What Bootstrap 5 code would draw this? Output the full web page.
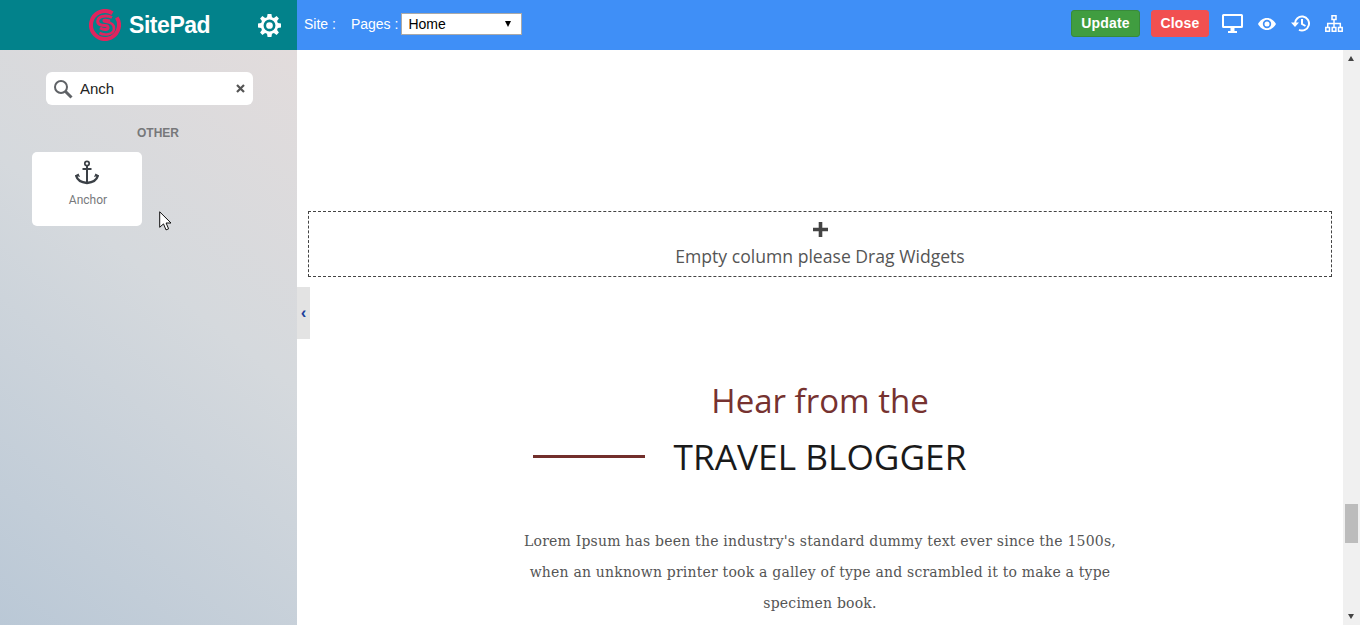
<!DOCTYPE html>
<html lang="en">
<head>
    <meta charset="UTF-8">
    <meta name="viewport" content="width=device-width, initial-scale=1.0">
    <title>SitePad Editor</title>
    <link href="https://cdn.jsdelivr.net/npm/bootstrap@5.3.0/dist/css/bootstrap.min.css" rel="stylesheet">
    <style>
        html, body { height: 100%; overflow: hidden; }
        body { font-family: "Liberation Sans", Arial, sans-serif; font-size: 14px; }
        .editor-top { height: 50px; background: #3f8ff7; color: #fff; }
        .brand-box { width: 297px; background: #02828b; padding-left: 89px; padding-right: 16px; }
        .brand-name { font-size: 23px; font-weight: 700; margin-left: 8px; letter-spacing: -.45px; }
        .gear-icon { margin-left: auto; }
        .top-fields { padding: 0 0 2px 7px; font-size: 14px; }
        .site-label { margin-right: 15px; }
        .page-select { width: 121px; height: 22px; background: #fff; border: 1px solid #a9a9a9; color: #000; padding: 0 6px; margin-left: 3px; font-size: 14px; }
        .caret-down { width: 0; height: 0; border-left: 3.5px solid transparent; border-right: 3.5px solid transparent; border-top: 6px solid #000; }
        .top-right { padding-bottom: 3px; }
        .top-btn { font-size: 14px; font-weight: 700; color: #fff; height: 27px; padding: 0; border-radius: 3px; line-height: 25px; letter-spacing: .2px; }
        .top-btn:hover { color: #fff; }
        .btn-update { background: #409d40; border: 1px solid #388a3a; width: 69px; margin-right: 11px; }
        .btn-close-page { background: #f15050; border: 1px solid #f15050; width: 58px; margin-right: 13px; }
        .top-tools { padding-right: 17px; gap: 15px; }
        .editor-body { height: 575px; position: relative; }
        .side-panel { width: 297px; background: linear-gradient(218deg, #e2dcdc 0%, #d5d9dd 42%, #bac8d6 100%); }
        .search-pill { width: 207px; height: 33px; margin: 22px 0 0 46px; background: #fff; border-radius: 6px; padding: 0 8px 0 7px; color: #222; font-size: 15px; }
        .search-pill svg:first-child { margin-right: 7px; }
        .search-pill span { padding-top: 2px; }
        .clear-x { margin-left: auto; }
        .side-heading { margin: 21px 0 0 0; padding-left: 19px; text-align: center; font-size: 12px; font-weight: 700; color: #77787a; line-height: 14px; }
        .widget-tile { width: 110px; height: 74px; margin: 12px 0 0 32px; background: #fff; border-radius: 5px; color: #77797c; font-size: 12px; padding-top: 8px; }
        .widget-tile span { margin-top: 8px; padding-left: 2px; line-height: 14px; font-family: Roboto, "Liberation Sans", sans-serif; }
        .pointer-mark { position: absolute; left: 159px; top: 161px; }
        .panel-toggle { position: absolute; left: 297px; top: 237px; width: 13px; height: 52px; background: #e3e3e3; color: #1d3f9c; font-size: 17px; font-weight: 700; line-height: 52px; text-align: center; z-index: 2; }
        .page-area { flex: 1; min-width: 0; padding: 161px 11px 0; background: #fff; overflow: hidden; }
        .empty-col { height: 66px; border: 1px dashed #444; font-family: "Open Sans", sans-serif; font-size: 17.6px; color: #555; line-height: 24px; }
        .empty-plus { display: block; margin: 10px auto 7px; }
        .hear-title { margin: 97px 0 0; text-align: center; font-family: "Open Sans", sans-serif; font-weight: 400; font-size: 33px; line-height: 54px; color: #763230; }
        .travel-row { display: grid; grid-template-columns: 1fr auto 1fr; align-items: center; font-family: "Open Sans", sans-serif; font-size: 35.25px; line-height: 56px; color: #1a1a1a; }
        .travel-name { padding-bottom: 2px; }
        .travel-rule { justify-self: end; width: 112px; height: 3px; background: #722f2b; margin: 0 29px 1px 0; }
        .blog-text { width: 600px; margin: 40px auto 0; text-align: center; font-family: "DejaVu Serif", serif; font-size: 14px; line-height: 31px; color: #555; letter-spacing: .2px; }
        .scroll-rail { width: 17px; background: #f0f0f0; position: relative; }
        .scroll-thumb { position: absolute; left: 2px; top: 454px; width: 13px; height: 39px; background: #bcbcbc; }
        .rail-arrow { position: absolute; left: 5px; width: 0; height: 0; border-left: 3.5px solid transparent; border-right: 3.5px solid transparent; }
        .rail-up { top: 6px; border-bottom: 5px solid #444; }
        .rail-down { bottom: 6px; border-top: 5px solid #444; }
    </style>
</head>
<body>
    <div class="editor-top d-flex align-items-center">
        <div class="brand-box h-100 d-flex align-items-center">
            <svg width="32" height="32" viewBox="0 0 32 32" fill="none" stroke="#e0245e">
                <path d="M23.500 4.200A14 14 0 1 0 27.800 8.500" stroke-width="4"/>
                <path d="M23 8.500C19 6.500 10 6 8.800 11.500 8 16 13 16.500 16 16.500 19.500 16.500 20.500 20.500 16.500 20.500 14 20.500 12.500 19.800 11 19" stroke-width="3"/>
                <path d="M10.500 24C15 26.500 24.500 26 25 20 25.300 15 21 13.200 17 12.800 14 12.500 14 11 16.500 11 18 11 19.500 11.500 21 12" stroke-width="2.600"/>
            </svg>
            <span class="brand-name">SitePad</span>
            <svg class="gear-icon" width="23" height="23" viewBox="0 0 24 24">
                <path fill="#fff" fill-rule="evenodd" d="M10 0h4l.6 3.300 2 .8L19.400 2.200l2.400 2.400-1.900 2.800.8 2 3.300.6v4l-3.300.6-.8 2 1.900 2.800-2.400 2.400-2.800-1.900-2 .8L14 24h-4l-.6-3.300-2-.8-2.800 1.900-2.400-2.400 1.900-2.800-.8-2L0 14v-4l3.300-.6.8-2L2.200 4.600l2.400-2.400 2.800 1.900 2-.8zM12 5.800a6.200 6.200 0 1 0 0 12.400 6.200 6.200 0 0 0 0-12.400zM12 8.500a3.500 3.500 0 1 1 0 7 3.500 3.500 0 0 1 0-7z"/>
            </svg>
        </div>
        <div class="top-fields d-flex align-items-center">
            <span class="site-label">Site :</span>
            <span>Pages :</span>
            <div class="page-select d-flex align-items-center justify-content-between">
                <span>Home</span><i class="caret-down me-1"></i>
            </div>
        </div>
        <div class="top-right d-flex align-items-center ms-auto">
            <a class="btn top-btn btn-update" href="#">Update</a>
            <a class="btn top-btn btn-close-page" href="#">Close</a>
            <div class="top-tools d-flex align-items-center">
                <svg width="21" height="19" viewBox="0 0 21 19"><path fill="#fff" fill-rule="evenodd" d="M1.500 0h18A1.500 1.500 0 0 1 21 1.500v11a1.500 1.500 0 0 1-1.500 1.500h-18A1.500 1.500 0 0 1 0 12.500v-11A1.500 1.500 0 0 1 1.500 0zM2 2v10h17V2zM8.500 14h4v3h2.500v2H6v-2h2.500z"/></svg>
                <svg width="18" height="12" viewBox="0 0 18 12"><path fill="#fff" fill-rule="evenodd" d="M9 0c4 0 7.200 2.600 9 6-1.800 3.400-5 6-9 6S1.800 9.400 0 6c1.800-3.400 5-6 9-6zM9 1.800a4.200 4.200 0 1 0 0 8.400 4.200 4.200 0 0 0 0-8.400zM9 3.500a2.500 2.500 0 1 1 0 5 2.500 2.500 0 0 1 0-5z"/></svg>
                <svg width="19" height="17" viewBox="0 0 19 17"><path fill="none" stroke="#fff" stroke-width="2" d="M4 8.500A7 7 0 1 1 8 14.800"/><path fill="#fff" d="M0 7.500h8L4 12zM10 4h2v4.500l3 1.700-1 1.600-4-2.300z"/></svg>
                <svg width="18" height="17" viewBox="0 0 18 17"><path fill="none" stroke="#fff" stroke-width="1.500" d="M7 .8h4v3.700H7zM.8 12.500h3.700v3.700H.8zM7.200 12.500h3.700v3.700H7.200zM13.500 12.500h3.700v3.700h-3.700zM9 4.500v8M2.700 12.500V8.500h12.600v4"/></svg>
            </div>
        </div>
    </div>
    <div class="editor-body d-flex">
        <aside class="side-panel">
            <div class="search-pill d-flex align-items-center">
                <svg width="20" height="20" viewBox="0 0 20 20" fill="none" stroke="#5f6266"><circle cx="8" cy="8" r="6" stroke-width="2"/><path d="M12.500 12.500L18.500 18.500" stroke-width="3"/></svg>
                <span>Anch</span>
                <svg class="clear-x" width="9" height="9" viewBox="0 0 9 9"><path d="M1 1l7 7M8 1l-7 7" stroke="#555" stroke-width="2.200"/></svg>
            </div>
            <div class="side-heading">OTHER</div>
            <div class="widget-tile d-flex flex-column align-items-center">
                <svg width="24" height="25" viewBox="0 0 24 25" fill="none" stroke="#3b4046">
                    <circle cx="12" cy="3.500" r="2.200" stroke-width="1.700"/>
                    <path d="M12 5.700V23M7.500 9h9" stroke-width="2"/>
                    <path d="M1 15c1 5 5.500 7.500 11 8 5.500-.5 10-3 11-8" stroke-width="2.400"/>
                    <path d="M0 15.500l3.500-2 1.500 3.500zM24 15.500l-3.500-2-1.500 3.500z" fill="#3b4046" stroke="none"/>
                </svg>
                <span>Anchor</span>
            </div>
        </aside>
        <svg class="pointer-mark" width="14" height="20" viewBox="0 0 14 20"><path d="M.7.800v15.500l3.800-3.400 2.500 6 2.600-1.100-2.500-5.800H12z" fill="#fff" stroke="#111"/></svg>
        <div class="panel-toggle">‹</div>
        <main class="page-area">
            <div class="empty-col text-center">
                <svg class="empty-plus" width="15" height="15" viewBox="0 0 15 15"><path d="M0 7.500h15M7.500 0v15" stroke="#444" stroke-width="3.600"/></svg>
                Empty column please Drag Widgets
            </div>
            <h2 class="hear-title">Hear from the</h2>
            <div class="travel-row">
                <div class="travel-rule"></div>
                <div class="travel-name">TRAVEL BLOGGER</div>
            </div>
            <p class="blog-text">Lorem Ipsum has been the industry's standard dummy text ever since the 1500s, when an unknown printer took a galley of type and scrambled it to make a type specimen book.</p>
        </main>
        <div class="scroll-rail">
            <i class="rail-arrow rail-up"></i>
            <div class="scroll-thumb"></div>
            <i class="rail-arrow rail-down"></i>
        </div>
    </div>
    <script src="https://cdn.jsdelivr.net/npm/bootstrap@5.3.0/dist/js/bootstrap.bundle.min.js"></script>
</body>
</html>
